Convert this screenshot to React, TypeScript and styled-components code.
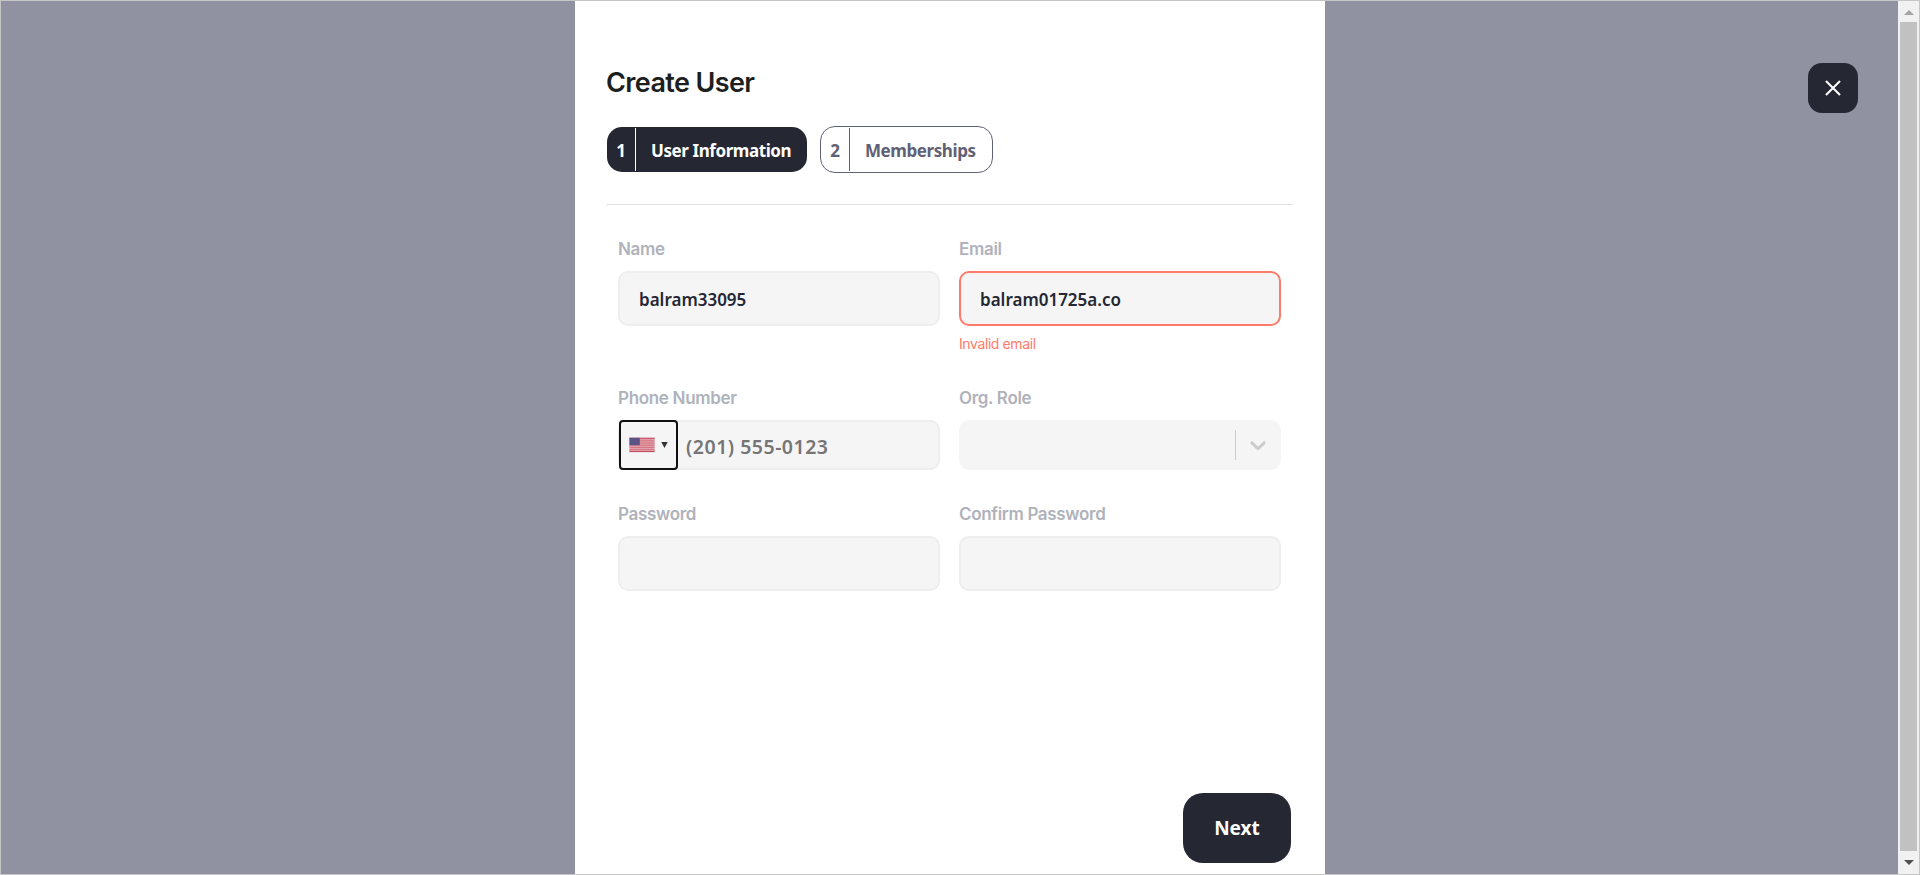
import React from "react";
import styled, { createGlobalStyle } from "styled-components";

const ink = "#252733";
const inter = `Inter, "Liberation Sans", sans-serif`;
const noto = `"Noto Sans", "Open Sans", sans-serif`;

const GlobalStyle = createGlobalStyle`
  *, *::before, *::after { box-sizing: border-box; }
  html, body { margin: 0; padding: 0; overflow: hidden; }
  button, input { font: inherit; margin: 0; }
`;

const Frame = styled.div`
  width: 1920px;
  height: 875px;
  display: flex;
  border: 1px solid #c6c6c6;
  background: #9092a1;
  overflow: hidden;
`;

const Overlay = styled.div`
  flex: 1;
  min-width: 0;
  display: flex;
`;

const Gutter = styled.div`
  flex: none;
  width: 574px;
  display: flex;
  justify-content: flex-end;
  padding: 62px 40px 0 0;

  &:last-child { width: 573px; }
`;

const CloseButton = styled.button`
  width: 50px;
  height: 50px;
  display: flex;
  align-items: center;
  justify-content: center;
  padding: 0 1px 1px 0;
  border: 0;
  border-radius: 14px;
  background: ${ink};
`;

const Panel = styled.main`
  flex: none;
  width: 750px;
  height: 873px;
  display: flex;
  flex-direction: column;
  padding: 65px 31px 11px;
  background: #fff;
`;

const Title = styled.h1`
  margin: 0;
  height: 34px;
  font: 600 27px/34px ${inter};
  letter-spacing: -0.62px;
  color: #1d1f1f;
`;

const Steps = styled.nav`
  display: flex;
  align-items: center;
  gap: 13px;
  height: 47px;
  margin-top: 26px;
  padding-left: 1px;
`;

const Step = styled.button<{ $active?: boolean; $width: number }>`
  display: flex;
  align-items: center;
  width: ${(p) => p.$width}px;
  height: ${(p) => (p.$active ? 45 : 47)}px;
  padding: 0;
  border: ${(p) => (p.$active ? "0" : "1px solid #5f6175")};
  border-radius: 15px;
  background: ${(p) => (p.$active ? ink : "#fff")};
  color: ${(p) => (p.$active ? "#fff" : "#5f6175")};
`;

const StepNumber = styled.span`
  width: 29px;
  height: 43px;
  border-right: 1px solid currentColor;
  font: 700 17px/46px ${noto};
  text-align: center;
`;

const StepName = styled.span`
  flex: 1;
  text-align: left;
  padding: 1px 0 0 15px;
  white-space: nowrap;
  font: 700 17px/45px ${noto};
  letter-spacing: -0.42px;
`;

const Divider = styled.hr`
  width: 687px;
  height: 1px;
  margin: 31px 0 0;
  border: 0;
  background: #e1e1e3;
`;

const Form = styled.form`
  display: grid;
  grid-template-columns: 322px 322px;
  grid-template-rows: 149px 116px auto;
  column-gap: 19px;
  padding: 33px 0 0 12px;
`;

const Field = styled.div`
  display: flex;
  flex-direction: column;
`;

const Label = styled.label`
  height: 20px;
  margin-bottom: 13px;
  font: 600 17px/22px ${inter};
  letter-spacing: -0.32px;
  color: #b0b2bb;
`;

const Input = styled.input<{ $invalid?: boolean }>`
  width: 100%;
  height: 55px;
  padding: 2px 20px 0 19px;
  border: 2px solid ${(p) => (p.$invalid ? "#ff7a68" : "#eee")};
  border-radius: 10px;
  outline: 0;
  background: #f5f5f5;
  color: ${ink};
  font: 600 17px/24px ${noto};
`;

const ErrorText = styled.span`
  margin-top: 8px;
  font: 400 14px/20px ${inter};
  letter-spacing: -0.4px;
  color: #ff7a68;
`;

const PhoneBox = styled.div`
  display: flex;
  height: 50px;
  border-radius: 10px;
  background: #f5f5f5;
  box-shadow: inset 0 0 0 2px #eee;
`;

const CountryButton = styled.button`
  display: flex;
  align-items: center;
  gap: 6px;
  width: 59px;
  height: 50px;
  margin-left: 1px;
  padding: 0 0 1px 8px;
  border: 2px solid #101010;
  border-radius: 4px;
  background: #f5f5f5;
`;

const PhoneInput = styled.input`
  flex: 1;
  min-width: 0;
  padding: 3px 0 0 8px;
  border: 0;
  outline: 0;
  background: transparent;
  font: 600 19.5px/26px ${noto};
  letter-spacing: 0.5px;
  &::placeholder { color: #757575; opacity: 1; }
`;

const Select = styled.div`
  display: flex;
  align-items: center;
  justify-content: flex-end;
  height: 50px;
  padding-right: 10px;
  border-radius: 10px;
  background: #f5f5f5;
`;

const SelectSeparator = styled.span`
  width: 1px;
  height: 30px;
  margin-right: 9px;
  background: #ccc;
`;

const Footer = styled.footer`
  display: flex;
  justify-content: flex-end;
  margin-top: auto;
  padding-right: 3px;
`;

const NextButton = styled.button`
  width: 108px;
  height: 70px;
  padding: 0;
  border: 0;
  border-radius: 20px;
  background: ${ink};
  color: #fff;
  font: 700 19px/70px ${noto};
`;

const Scrollbar = styled.div`
  flex: none;
  width: 21px;
  display: flex;
  flex-direction: column;
  align-items: center;
  background: #f1f1f1;
`;

const ScrollArrow = styled.div<{ $down?: boolean }>`
  height: ${(p) => (p.$down ? 23 : 21)}px;
  padding-top: ${(p) => (p.$down ? 0 : 2)}px;
  display: flex;
  align-items: center;
  justify-content: center;
`;

const Thumb = styled.div`
  flex: 1;
  width: 17px;
  background: #c1c1c1;
`;

const Flag = () => (
  <svg width="26" height="16" viewBox="0 0 26 16">
    <rect width="26" height="16" fill="#e8e6e8" />
    <rect x="0.5" y="0.8" width="25" height="14.2" fill="#e4a3ab" />
    {[1, 3.2, 5.4, 7.6, 9.8, 12].map((y) => (
      <rect key={y} x="0.5" y={y} width="25" height="1.2" fill="#d57885" />
    ))}
    <rect x="0.5" y="0.8" width="25" height="0.9" fill="#ca5365" />
    <rect x="0.5" y="14" width="25" height="1" fill="#ca4a5d" />
    <rect x="0.5" y="0.8" width="10.3" height="7.4" fill="#5a5486" />
  </svg>
);

export default function App() {
  return (
    <>
      <GlobalStyle />
      <Frame>
        <Overlay>
          <Gutter />
          <Panel>
            <Title>Create User</Title>
            <Steps>
              <Step $active $width={200}>
                <StepNumber>1</StepNumber>
                <StepName>User Information</StepName>
              </Step>
              <Step $width={173}>
                <StepNumber>2</StepNumber>
                <StepName>Memberships</StepName>
              </Step>
            </Steps>
            <Divider />
            <Form>
              <Field>
                <Label>Name</Label>
                <Input defaultValue="balram33095" spellCheck={false} />
              </Field>
              <Field>
                <Label>Email</Label>
                <Input $invalid defaultValue="balram01725a.co" spellCheck={false} />
                <ErrorText>Invalid email</ErrorText>
              </Field>
              <Field>
                <Label>Phone Number</Label>
                <PhoneBox>
                  <CountryButton type="button" aria-label="Country">
                    <Flag />
                    <svg width="7" height="6" viewBox="0 0 7 6">
                      <path d="M0.3 0H6.7L3.5 6Z" fill="#333" />
                    </svg>
                  </CountryButton>
                  <PhoneInput placeholder="(201) 555-0123" />
                </PhoneBox>
              </Field>
              <Field>
                <Label>Org. Role</Label>
                <Select>
                  <SelectSeparator />
                  <svg width="26" height="26" viewBox="0 0 20 20" fill="#ccc">
                    <path d="M4.516 7.548c0.436-0.446 1.043-0.481 1.576 0l3.908 3.747 3.908-3.747c0.533-0.481 1.141-0.446 1.574 0 0.436 0.445 0.408 1.197 0 1.615-0.406 0.418-4.695 4.502-4.695 4.502-0.217 0.223-0.502 0.335-0.787 0.335s-0.57-0.112-0.789-0.335c0 0-4.287-4.084-4.695-4.502s-0.436-1.17 0-1.615z" />
                  </svg>
                </Select>
              </Field>
              <Field>
                <Label>Password</Label>
                <Input type="password" />
              </Field>
              <Field>
                <Label>Confirm Password</Label>
                <Input type="password" />
              </Field>
            </Form>
            <Footer>
              <NextButton>Next</NextButton>
            </Footer>
          </Panel>
          <Gutter>
            <CloseButton aria-label="Close">
              <svg width="16" height="16" viewBox="0 0 16 16">
                <path d="M1 1L15 15M15 1L1 15" stroke="#fff" strokeWidth="2" />
              </svg>
            </CloseButton>
          </Gutter>
        </Overlay>
        <Scrollbar>
          <ScrollArrow>
            <svg width="10" height="5" viewBox="0 0 10 5">
              <path d="M0 5L5 0L10 5Z" fill="#a3a3a3" />
            </svg>
          </ScrollArrow>
          <Thumb />
          <ScrollArrow $down>
            <svg width="10" height="5" viewBox="0 0 10 5">
              <path d="M0 0H10L5 5Z" fill="#505050" />
            </svg>
          </ScrollArrow>
        </Scrollbar>
      </Frame>
    </>
  );
}
